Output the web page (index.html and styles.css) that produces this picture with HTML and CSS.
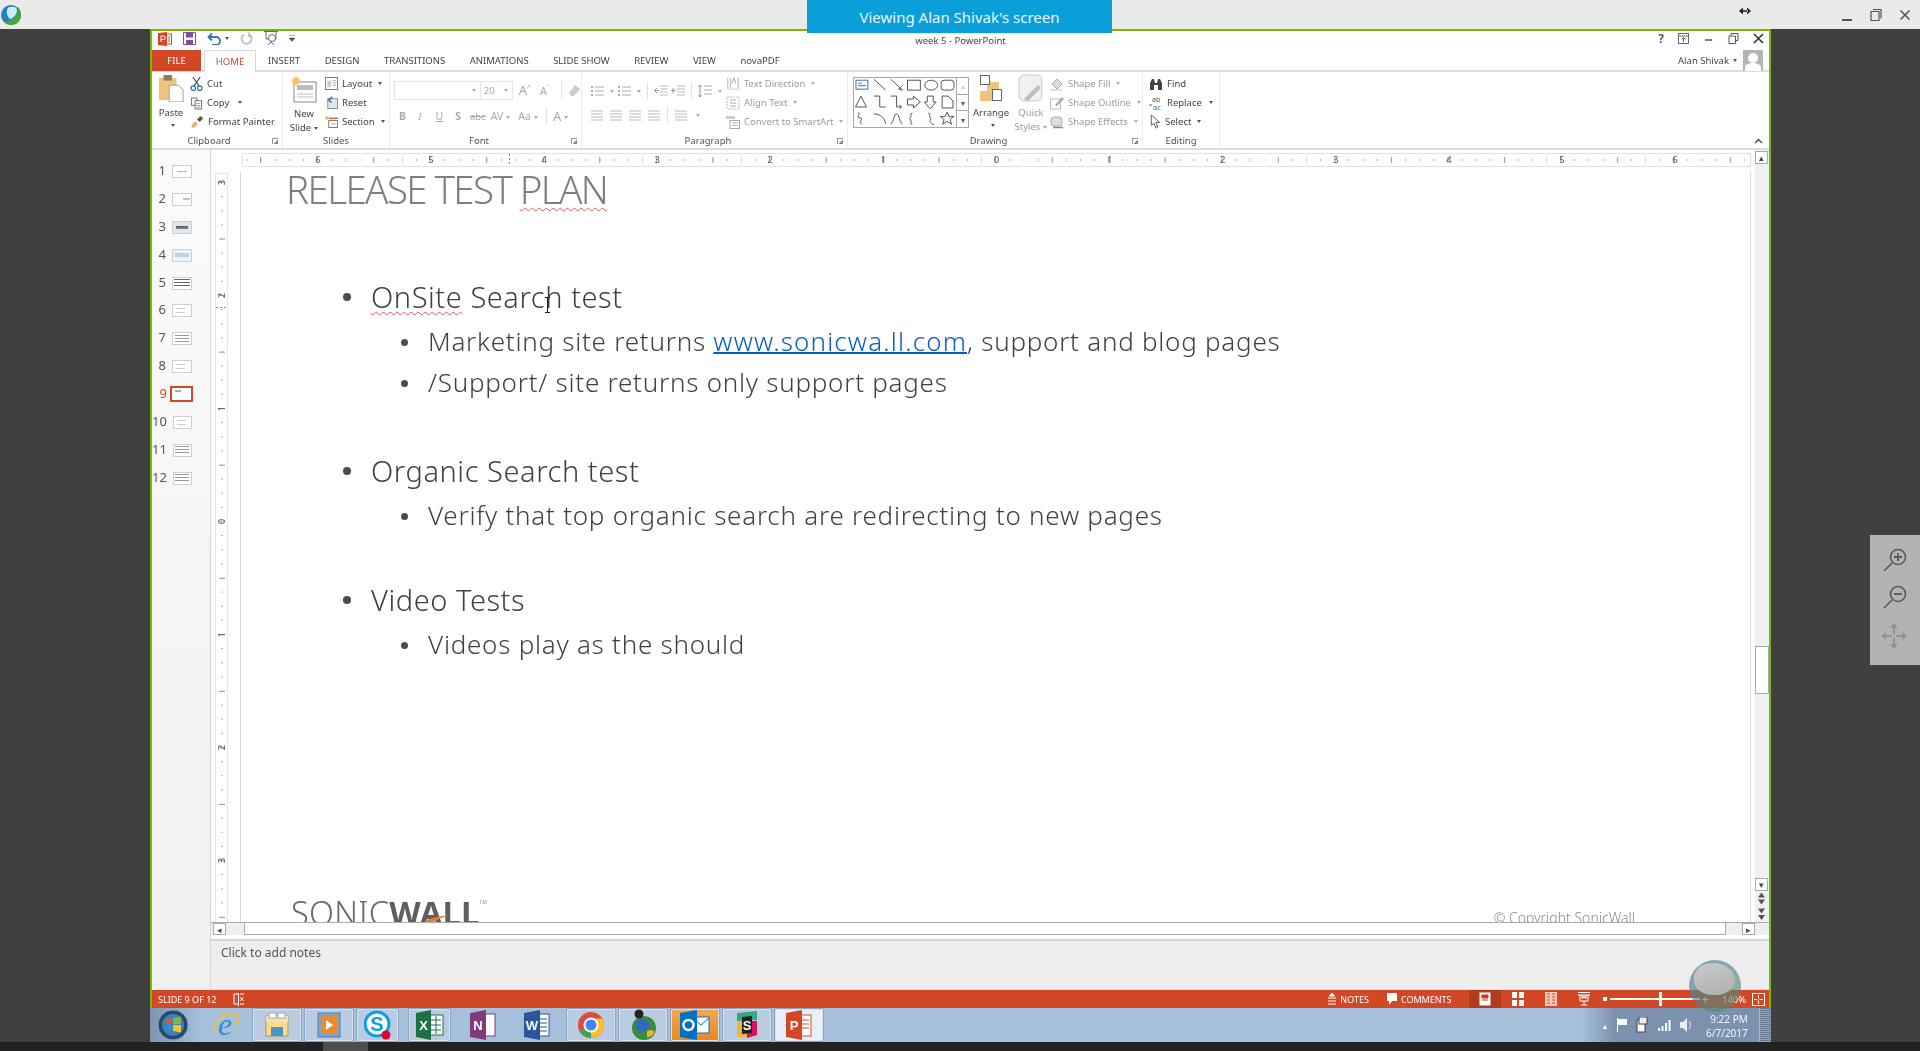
FILE: index.html
```html
<!DOCTYPE html>
<html lang="en">
<head>
  <meta charset="UTF-8">
  <title>Viewing Alan Shivak's screen</title>
  <link rel="stylesheet" href="styles.css">
</head>
<body>

<svg class="sprite" xmlns="http://www.w3.org/2000/svg">
  <symbol id="i-paste" viewBox="0 0 28 30"><rect x="1" y="4" width="19" height="24" fill="#eec47c"/><rect x="6" y="1" width="9" height="6" fill="#8a7a60"/><path d="M12 12h10l5 5v13H12z" fill="#fff" stroke="#999"/></symbol>
  <symbol id="i-cut" viewBox="0 0 14 16"><path d="M3 1l7 10M11 1L4 11" stroke="#555" fill="none" stroke-width="1.4"/><circle cx="3.5" cy="13" r="2.4" fill="none" stroke="#2a6fb5" stroke-width="1.3"/><circle cx="10.5" cy="13" r="2.4" fill="none" stroke="#2a6fb5" stroke-width="1.3"/></symbol>
  <symbol id="i-copy" viewBox="0 0 14 14"><path d="M1.5 1.5h6v8h-6z" fill="#fff" stroke="#666"/><path d="M5.5 4.5h7v9h-7z" fill="#fff" stroke="#666"/><path d="M7 7.5h4M7 9.5h4M7 11.5h4" stroke="#7a9cc0"/></symbol>
  <symbol id="i-painter" viewBox="0 0 16 16"><path d="M2 15c-1-3 1-6 4-8l3 3c-2 3-4 5-7 5z" fill="#e3b670"/><path d="M8 5l4-4 3 3-4 4z" fill="#555"/></symbol>
  <symbol id="i-newslide" viewBox="0 0 26 28"><rect x="3" y="6" width="22" height="20" fill="#fff" stroke="#888"/><rect x="6" y="9" width="16" height="5" fill="#bbb"/><path d="M6 18h16M6 21h16" stroke="#bbb"/><circle cx="5" cy="5" r="3.4" fill="#f2c265"/><path d="M5 0v10M0 5h10M1.5 1.5l7 7M8.5 1.5l-7 7" stroke="#f2c265"/></symbol>
  <symbol id="i-layout" viewBox="0 0 14 14"><rect x=".5" y=".5" width="13" height="13" fill="#fff" stroke="#777"/><rect x="2.5" y="4" width="4" height="7" fill="#ccc"/><path d="M8 4h4M8 6.500h4M8 9h4" stroke="#aaa"/></symbol>
  <symbol id="i-reset" viewBox="0 0 14 14"><rect x="3" y="3" width="10.500" height="10.500" fill="#dfe8f2" stroke="#888"/><path d="M8 1L4 4l3 3" fill="none" stroke="#2a6fb5" stroke-width="1.500"/></symbol>
  <symbol id="i-section" viewBox="0 0 14 14"><rect x="4" y="6" width="9.500" height="7.500" fill="#fff" stroke="#777"/><path d="M4 3.500h10" stroke="#d9662e" stroke-width="1.500"/><circle cx="2" cy="3" r="2" fill="#f0bd60"/><path d="M6 9.500h6" stroke="#aaa"/></symbol>
  <symbol id="i-lines" viewBox="0 0 12 12"><path d="M0 2h12M0 5h12M0 8h12M0 11h12" stroke="currentColor"/></symbol>
  <symbol id="i-bullets" viewBox="0 0 14 12"><path d="M5 2h9M5 6h9M5 10h9" stroke="#aaa"/><path d="M1 1h2v2H1zM1 5h2v2H1zM1 9h2v2H1z" fill="#aaa"/></symbol>
  <symbol id="i-indent" viewBox="0 0 14 12"><path d="M6 1h8M6 4h8M6 7h8M6 10h8" stroke="#bbb"/><path d="M0 5.500h5M3 3L.5 5.500 3 8" stroke="#999" fill="none"/></symbol>
  <symbol id="i-spacing" viewBox="0 0 14 14"><path d="M6 2h8M6 6h8M6 10h8" stroke="#aaa"/><path d="M2 1v12M.5 3L2 1l1.500 2M.5 11L2 13l1.500-2" stroke="#999" fill="none"/></symbol>
  <symbol id="i-textdir" viewBox="0 0 14 16"><path d="M1.500 2v11M4.500 2v11M12.500 2v11" stroke="#aaa"/><path d="M6 8l2-6 2 6" stroke="#aaa" fill="none"/><path d="M0 14h14" stroke="#ccc"/></symbol>
  <symbol id="i-align" viewBox="0 0 14 14"><rect x="1" y="1" width="12" height="12" fill="none" stroke="#bbb" stroke-dasharray="2 1"/><path d="M4 4h6M4 7h6M4 10h6" stroke="#aaa"/></symbol>
  <symbol id="i-smartart" viewBox="0 0 14 14"><path d="M0 1h9v3H0z" fill="#ccc"/><rect x="4" y="5.500" width="9.500" height="8" fill="#fff" stroke="#aaa"/><path d="M6 8h6M6 10.500h6" stroke="#bbb"/></symbol>
  <symbol id="i-arrange" viewBox="0 0 24 28"><rect x="8" y="8" width="12" height="13" fill="#eec47c"/><rect x="1" y="17" width="12" height="10" fill="#eec47c"/><rect x="1.500" y="1.500" width="9" height="9" fill="#fff" stroke="#666"/><rect x="13.500" y="15.500" width="9" height="11" fill="#fff" stroke="#666"/></symbol>
  <symbol id="i-quick" viewBox="0 0 26 28"><rect x="1" y="1" width="23" height="26" rx="5" fill="#f2eff1" stroke="#c9c9c9"/><path d="M6 25l14-14 3 3-13 13z" fill="#bdbdbd"/></symbol>
  <symbol id="i-fill" viewBox="0 0 14 14"><path d="M2 7l5-5 5 5-5 5z" fill="#ddd" stroke="#aaa"/><path d="M0 12h12v2H0z" fill="#e3e3e3"/></symbol>
  <symbol id="i-outline" viewBox="0 0 14 14"><rect x=".5" y="3" width="10" height="10" fill="#fff" stroke="#bbb"/><path d="M5 9l7-8 2 2-7 7z" fill="#aaa"/></symbol>
  <symbol id="i-effects" viewBox="0 0 14 14"><rect x="1" y="2" width="11" height="9" rx="3" fill="#ddd" stroke="#aaa"/><path d="M3 12.500h10" stroke="#888" stroke-width="1.500"/></symbol>
  <symbol id="i-find" viewBox="0 0 14 14"><path d="M1 13V6l2-4h2l1 4h2l1-4h2l2 4v7H9V8H5v5z" fill="#444"/></symbol>
  <symbol id="i-replace" viewBox="0 0 14 14"><text x="3" y="6" font-size="7" fill="#555" font-family="Noto Sans">ab</text><text x="4" y="13.500" font-size="7.500" fill="#2a6fb5" font-family="Noto Sans">ac</text><path d="M0 9h3" stroke="#2a6fb5"/></symbol>
  <symbol id="i-select" viewBox="0 0 12 16"><path d="M2 1v11l3-2 2 5 2-1-2-5h4z" fill="#fff" stroke="#555"/></symbol>
</svg>

<div class="viewing-tab">Viewing Alan Shivak's screen</div>

<header class="topbar">
  <svg class="app-logo" width="22" height="22" viewBox="0 0 22 22"><circle cx="11" cy="11" r="10" fill="#1d83c5"/><path d="M11 21c6 0 10-4 10-10 0-4-2-7-3-8 0 8-4 14-14 15 2 2 4 3 7 3z" fill="#4aa53e"/><path d="M9 3c5-1 8 0 8 3 0 4-3 8-7 9-3-2-5-9-1-12z" fill="#cfe9f5"/></svg>
  <div class="topbar-right">
    <svg class="resize-arrow" width="12" height="8" viewBox="0 0 12 8"><path d="M0 4l4-3.500v7zM12 4L8 .5v7zM3 3.200h6v1.600H3z" fill="#222"/></svg>
    <svg class="host-ctl" width="12" height="14" viewBox="0 0 12 14"><path d="M1 12h10" stroke="#555" stroke-width="2"/></svg>
    <svg class="host-ctl" width="12" height="14" viewBox="0 0 12 14"><path d="M3 1.500h8v9M1 3.500h8v9H1z" stroke="#555" fill="none" stroke-width="1.200"/></svg>
    <svg class="host-ctl" width="12" height="14" viewBox="0 0 12 14"><path d="M1.500 2.500l9 9M10.500 2.500l-9 9" stroke="#555" stroke-width="1.600"/></svg>
  </div>
</header>

<main class="stage">
  <div class="desktop">
    <div class="window">

      <div class="titlebar">
        <div class="qat">
          <svg width="14" height="14" viewBox="0 0 14 14"><rect x="5" y="2" width="8.500" height="10" fill="#fff" stroke="#d24726"/><path d="M0 1l9-1v14l-9-1z" fill="#d24726"/><path d="M3 10V4h2.500a1.500 1.500 0 0 1 0 3.500H3" fill="none" stroke="#fff"/><path d="M10 5h2M10 7h2M10 9h2" stroke="#d24726"/></svg>
          <svg width="13" height="13" viewBox="0 0 13 13"><path d="M.5.500h12v12H.5z" fill="#fff" stroke="#7d4ea5"/><path d="M3 .5h7v5H3zM3 8h7v4.500H3z" fill="#7d4ea5"/></svg>
          <svg width="14" height="13" viewBox="0 0 14 13"><path d="M2 5h7a4 4 0 0 1 0 8H5M5 1.500L1.500 5 5 8.500" stroke="#3474b5" fill="none" stroke-width="1.800"/></svg>
          <i class="caret caret-dark"></i>
          <svg width="13" height="13" viewBox="0 0 13 13"><path d="M9 2.500a5 5 0 1 1-5 0M9 .5v3.500h3" stroke="#bbb" fill="none" stroke-width="1.800"/></svg>
          <svg width="14" height="15" viewBox="0 0 14 15"><path d="M0 .5h14M2 1v7h10V1M7 8v3M4 14l3-3 3 3" stroke="#666" fill="none"/><circle cx="8" cy="7" r="3.500" fill="#fff" stroke="#666"/></svg>
          <svg width="6" height="7" viewBox="0 0 6 7"><path d="M0 .5h6M0 3h6L3 6.500z" fill="#555" stroke="#555" stroke-width=".5"/></svg>
        </div>
        <div class="doc-title">week 5 - PowerPoint</div>
        <div class="win-ctls">
          <span class="help">?</span>
          <svg width="11" height="11" viewBox="0 0 11 11"><rect x=".5" y=".5" width="10" height="10" fill="none" stroke="#666"/><path d="M.5 3h10M5.500 9V4.500M3.500 6.500l2-2 2 2" stroke="#666" fill="none"/></svg>
          <svg width="11" height="11" viewBox="0 0 11 11"><path d="M2 7h7" stroke="#555" stroke-width="1.500"/></svg>
          <svg width="11" height="11" viewBox="0 0 11 11"><path d="M3 2.500V.5h7v7H8M1 3h6.500v7.500H1z" fill="none" stroke="#555"/></svg>
          <svg width="11" height="11" viewBox="0 0 11 11"><path d="M1 1l9 9M10 1l-9 9" stroke="#333" stroke-width="1.600"/></svg>
        </div>
      </div>

      <nav class="tabs">
        <div class="tab-file">FILE</div>
        <div class="tab tab-active">HOME</div>
        <div class="tab">INSERT</div>
        <div class="tab">DESIGN</div>
        <div class="tab">TRANSITIONS</div>
        <div class="tab">ANIMATIONS</div>
        <div class="tab">SLIDE SHOW</div>
        <div class="tab">REVIEW</div>
        <div class="tab">VIEW</div>
        <div class="tab tab-nova">novaPDF</div>
        <div class="user">
          <span>Alan Shivak</span><i class="caret caret-dark"></i>
          <svg class="avatar" width="20" height="21" viewBox="0 0 20 21"><rect width="20" height="21" fill="#b5b5b5"/><circle cx="10" cy="8" r="5" fill="#fff"/><path d="M2 21v-4c1-3 5-4 8-4s7 1 8 4v4z" fill="#fff"/></svg>
        </div>
      </nav>

      <section class="ribbon">
        <div class="group group-clipboard">
          <div class="group-body">
            <div class="big-btn big-paste">
              <svg width="26" height="28"><use href="#i-paste"/></svg>
              <span>Paste</span>
              <i class="caret caret-dark"></i>
            </div>
            <div class="stack">
              <div class="small-btn"><svg width="13" height="15"><use href="#i-cut"/></svg>Cut</div>
              <div class="small-btn"><svg width="13" height="14"><use href="#i-copy"/></svg>Copy<i class="caret caret-dark caret-far"></i></div>
              <div class="small-btn"><svg width="14" height="14"><use href="#i-painter"/></svg>Format Painter</div>
            </div>
          </div>
          <div class="group-label">Clipboard<i class="launcher"></i></div>
        </div>

        <div class="group group-slides">
          <div class="group-body">
            <div class="big-btn big-new">
              <svg width="26" height="28"><use href="#i-newslide"/></svg>
              <span>New</span>
              <span>Slide<i class="caret caret-dark"></i></span>
            </div>
            <div class="stack">
              <div class="small-btn"><svg width="13" height="13"><use href="#i-layout"/></svg>Layout<i class="caret caret-dark"></i></div>
              <div class="small-btn"><svg width="13" height="13"><use href="#i-reset"/></svg>Reset</div>
              <div class="small-btn"><svg width="13" height="13"><use href="#i-section"/></svg>Section<i class="caret caret-dark"></i></div>
            </div>
          </div>
          <div class="group-label">Slides</div>
        </div>

        <div class="group group-font">
          <div class="font-rows">
            <div class="font-row">
              <div class="combo combo-font"><i class="caret"></i></div>
              <div class="combo combo-size">20<i class="caret"></i></div>
              <span class="glyph glyph-grow">A<sup>^</sup></span>
              <span class="glyph glyph-shrink">A<sup>ˇ</sup></span>
              <i class="vsep"></i>
              <svg width="13" height="13" viewBox="0 0 13 13"><path d="M1 9l6-8 5 4-6 7H3z" fill="#ccc"/><path d="M6 6l3 3" stroke="#f2c2b5"/></svg>
            </div>
            <div class="font-row font-row-b">
              <b class="glyph">B</b><em class="glyph glyph-i">I</em><u class="glyph">U</u><b class="glyph glyph-s">S</b><span class="glyph glyph-abc"><s>abc</s></span><span class="glyph glyph-av">AV<i class="caret"></i></span><span class="glyph glyph-aa">Aa<i class="caret"></i></span><i class="vsep"></i><span class="glyph glyph-a">A<i class="caret"></i></span>
            </div>
          </div>
          <div class="group-label">Font<i class="launcher"></i></div>
        </div>

        <div class="group group-para">
          <div class="group-body">
            <div class="para-rows">
              <div class="para-row">
                <svg width="14" height="12"><use href="#i-bullets"/></svg><i class="caret"></i>
                <svg width="14" height="12"><use href="#i-bullets"/></svg><i class="caret"></i>
                <i class="vsep"></i>
                <svg width="14" height="12"><use href="#i-indent"/></svg>
                <svg width="14" height="12"><use href="#i-indent"/></svg>
                <i class="vsep"></i>
                <svg width="14" height="14"><use href="#i-spacing"/></svg><i class="caret"></i>
              </div>
              <div class="para-row para-row-b">
                <svg class="align-icon" width="14" height="12"><use href="#i-lines"/></svg>
                <svg class="align-icon" width="14" height="12"><use href="#i-lines"/></svg>
                <svg class="align-icon" width="14" height="12"><use href="#i-lines"/></svg>
                <svg class="align-icon" width="14" height="12"><use href="#i-lines"/></svg>
                <i class="vsep"></i>
                <svg class="align-icon" width="14" height="12"><use href="#i-lines"/></svg><i class="caret"></i>
              </div>
            </div>
            <div class="stack stack-off">
              <div class="small-btn"><svg width="14" height="15"><use href="#i-textdir"/></svg>Text Direction<i class="caret"></i></div>
              <div class="small-btn"><svg width="14" height="14"><use href="#i-align"/></svg>Align Text<i class="caret"></i></div>
              <div class="small-btn"><svg width="14" height="14"><use href="#i-smartart"/></svg>Convert to SmartArt<i class="caret"></i></div>
            </div>
          </div>
          <div class="group-label">Paragraph<i class="launcher"></i></div>
        </div>

        <div class="group group-draw">
          <div class="group-body">
            <div class="gallery">
              <svg width="103" height="49" viewBox="0 0 103 49" fill="none" stroke="#555">
                <rect x="2" y="2" width="12" height="9" stroke="#3e6ea8"/><path d="M4 5h4M4 7.500h8" stroke="#3e6ea8"/>
                <path d="M20 1l12 11M37 1l12 11M49 12l-4-1 3-3"/>
                <rect x="54" y="2" width="13" height="10"/><ellipse cx="78" cy="7" rx="6.500" ry="5"/><rect x="88" y="2" width="13" height="10" rx="3"/>
                <path d="M7 18l5.500 11H1.500zM20 18h6v11h6M37 18h6v11h5M46 27l2 2-2 2M54 21h6v-3l7 6-7 6v-3h-6zM74 18h6v6h3l-6 7-6-7h3zM89 18h6l5 5v7H89z"/>
                <path d="M4 35c4 0-3 5 2 5s-3 5 2 6M20 36c6 0 11 4 12 10M37 46c3 0 3-10 6-10s3 10 6 10M59 35c-3 0 0 5-3 6 3 1 0 6 3 6M75 35c3 0 0 5 3 6-3 1 0 6 3 6"/>
                <path d="M94 34l2 4.500h5l-4 3 1.500 5L94 43.500 89.500 46.500l1.500-5-4-3h5z"/>
              </svg>
              <div class="gallery-scroll">
                <span class="off">&#9652;</span><span>&#9662;</span><span>&#9662;</span>
              </div>
            </div>
            <div class="big-btn big-arrange">
              <svg width="24" height="28"><use href="#i-arrange"/></svg>
              <span>Arrange</span>
              <i class="caret caret-dark"></i>
            </div>
            <div class="big-btn big-quick">
              <svg width="26" height="28"><use href="#i-quick"/></svg>
              <span>Quick</span>
              <span>Styles<i class="caret"></i></span>
            </div>
            <div class="stack stack-off">
              <div class="small-btn"><svg width="14" height="14"><use href="#i-fill"/></svg>Shape Fill<i class="caret"></i></div>
              <div class="small-btn"><svg width="14" height="14"><use href="#i-outline"/></svg>Shape Outline<i class="caret"></i></div>
              <div class="small-btn"><svg width="14" height="14"><use href="#i-effects"/></svg>Shape Effects<i class="caret"></i></div>
            </div>
          </div>
          <div class="group-label">Drawing<i class="launcher"></i></div>
        </div>

        <div class="group group-edit">
          <div class="group-body">
            <div class="stack">
              <div class="small-btn"><svg width="14" height="14"><use href="#i-find"/></svg>Find</div>
              <div class="small-btn"><svg width="14" height="14"><use href="#i-replace"/></svg>Replace<i class="caret caret-dark caret-far"></i></div>
              <div class="small-btn"><svg width="12" height="15"><use href="#i-select"/></svg>Select<i class="caret caret-dark"></i></div>
            </div>
          </div>
          <div class="group-label">Editing</div>
        </div>

        <svg class="collapse" width="9" height="6" viewBox="0 0 9 6"><path d="M1 5l3.500-3.500L8 5" stroke="#444" fill="none" stroke-width="1.300"/></svg>
      </section>

      <div class="workspace">
        <aside class="thumbs">
          <div class="thumb-row"><span>1</span><i class="thumb thumb-orange"></i></div>
          <div class="thumb-row"><span>2</span><i class="thumb thumb-orange2"></i></div>
          <div class="thumb-row"><span>3</span><i class="thumb thumb-dark"></i></div>
          <div class="thumb-row"><span>4</span><i class="thumb thumb-blue"></i></div>
          <div class="thumb-row"><span>5</span><i class="thumb thumb-dark2"></i></div>
          <div class="thumb-row"><span>6</span><i class="thumb thumb-light"></i></div>
          <div class="thumb-row"><span>7</span><i class="thumb thumb-text"></i></div>
          <div class="thumb-row"><span>8</span><i class="thumb thumb-light"></i></div>
          <div class="thumb-row thumb-current"><span>9</span><i class="thumb"></i></div>
          <div class="thumb-row"><span>10</span><i class="thumb thumb-light"></i></div>
          <div class="thumb-row"><span>11</span><i class="thumb thumb-text"></i></div>
          <div class="thumb-row"><span>12</span><i class="thumb thumb-text"></i></div>
        </aside>

        <div class="editor">
          <div class="editor-top">
            <div class="editor-left">
              <div class="ruler-h">
                <i class="ruler-mark"></i>
                <span>6</span><span>5</span><span>4</span><span>3</span><span>2</span><span>1</span><span>0</span><span>1</span><span>2</span><span>3</span><span>4</span><span>5</span><span>6</span>
              </div>
              <div class="canvas">
                <div class="ruler-v">
                  <i class="ruler-mark-v"></i>
                  <div class="ruler-v-nums">
                    <span><b>3</b></span><span><b>2</b></span><span><b>1</b></span><span><b>0</b></span><span><b>1</b></span><span><b>2</b></span><span><b>3</b></span>
                  </div>
                </div>
                <article class="slide">
                  <h1 class="slide-title">RELEASE TEST <span class="spell">PLAN</span></h1>
                  <div class="slide-body">
                    <section class="topic topic-first">
                      <p class="lvl1"><span class="spell">OnSite</span> Search test</p>
                      <p class="lvl2">Marketing site returns <a class="slide-link">www.sonicwa.ll.com</a>, support and blog pages</p>
                      <p class="lvl2">/Support/ site returns only support pages</p>
                    </section>
                    <section class="topic topic-second">
                      <p class="lvl1">Organic Search test</p>
                      <p class="lvl2">Verify that top organic search are redirecting to new pages</p>
                    </section>
                    <section class="topic topic-third">
                      <p class="lvl1">Video Tests</p>
                      <p class="lvl2">Videos play as the should</p>
                    </section>
                  </div>
                  <svg class="ibeam" width="7" height="16" viewBox="0 0 7 16"><path d="M1 .5h5M3.500.5v15M1 15.500h5" stroke="#222" fill="none"/></svg>
                  <footer class="slide-foot">
                    <div class="sw-logo">SONIC<b>WALL</b><sup>TM</sup>
                      <svg class="sw-swoosh" width="28" height="8" viewBox="0 0 28 8"><path d="M0 8C6 4 16 1 28 0 20 2 14 5 11 8z" fill="#f47a20"/></svg>
                    </div>
                    <div class="sw-copy">&copy; Copyright SonicWall</div>
                  </footer>
                </article>
              </div>
            </div>
            <div class="vscroll">
              <div class="sb-btn sb-up">&#9652;</div>
              <div class="sb-track"><div class="sb-thumb"></div></div>
              <div class="sb-btn sb-down">&#9662;</div>
              <svg class="sb-double" width="13" height="15" viewBox="0 0 13 15"><path d="M6.500 1.500L10 6.500H3zM3 8.500h7L6.500 13.500z" fill="#555"/></svg>
              <svg class="sb-double sb-last" width="13" height="16" viewBox="0 0 13 16"><path d="M3 2.500h7L6.500 7.500zM3 9h7l-3.500 5z" fill="#555"/></svg>
            </div>
          </div>
          <div class="hscroll">
            <div class="sb-btn">&#9666;</div>
            <div class="hs-thumb"></div>
            <div class="sb-btn">&#9656;</div>
          </div>
          <div class="notes">Click to add notes</div>
        </div>
      </div>

      <footer class="statusbar">
        <span>SLIDE 9 OF 12</span>
        <svg class="st-proof" width="12" height="13" viewBox="0 0 12 13"><path d="M5.500 1H1v10h4.500M5.500 0v13M7 1h4M7 11h4" stroke="#fff" fill="none"/><path d="M7 4l3.500 4M10.500 4L7 8" stroke="#fff"/></svg>
        <div class="st-right">
          <div class="st-item"><svg width="8" height="13" viewBox="0 0 8 13"><path d="M4 0l2.500 3h-5zM0 5h8M0 8h8M0 11h8" fill="#fff" stroke="#fff"/></svg>NOTES</div>
          <div class="st-item st-comments"><svg width="10" height="12" viewBox="0 0 10 12"><path d="M0 0h10v8H5L2 12V8H0z" fill="#fff"/></svg>COMMENTS</div>
          <div class="st-views">
            <div class="st-view st-view-on"><svg width="12" height="14" viewBox="0 0 12 14"><rect x=".5" y=".5" width="11" height="13" fill="#fff"/><path d="M3 3h6v3H3zM3 8h6" fill="#c43e1f" stroke="#c43e1f"/></svg></div>
            <div class="st-view"><svg width="12" height="14" viewBox="0 0 12 14"><path d="M0 0h5v6H0zM7 0h5v6H7zM0 8h5v6H0zM7 8h5v6H7z" fill="#fff"/></svg></div>
            <div class="st-view"><svg width="12" height="14" viewBox="0 0 12 14"><rect width="12" height="14" fill="#f4c9bc"/><path d="M2 2h3M7 2h3M2 5h3M7 5h3M2 8h3M7 8h3M2 11h3M7 11h3" stroke="#d24726"/></svg></div>
            <div class="st-view"><svg width="12" height="14" viewBox="0 0 12 14"><path d="M0 .5h12M0 3h12M2 3v6h8V3M6 9v4M3 13h6" stroke="#fff" fill="none"/><rect x="3" y="3.500" width="6" height="3" fill="#f4c9bc"/></svg></div>
          </div>
          <div class="st-zoom">
            <i class="st-minus"></i>
            <div class="st-track"><i class="st-knob"></i></div>
            <span class="st-plus">+</span>
          </div>
          <span class="st-pct">140%</span>
          <svg class="st-fit" width="13" height="13" viewBox="0 0 13 13"><rect x=".5" y=".5" width="12" height="12" fill="none" stroke="#fff"/><path d="M6.500 2v3.500M6.500 11V7.500M2 6.500h3.500M11 6.500H7.500" stroke="#fff"/></svg>
        </div>
      </footer>
    </div>

    <div class="taskbar">
      <div class="task task-start">
        <svg width="32" height="32" viewBox="0 0 32 32"><circle cx="16" cy="16" r="15" fill="#27486e" stroke="#7e9cbc"/><circle cx="16" cy="16" r="11" fill="#3f7fb8"/><path d="M8 11l7-2v6H8z" fill="#e0552b"/><path d="M16 9l8-1.500V15h-8z" fill="#7db941"/><path d="M8 16h7v6l-7-1.500z" fill="#2d8fd5"/><path d="M16 16h8v7.500L16 22z" fill="#f3c22c"/></svg>
      </div>
      <div class="task task-ie">
        <svg width="30" height="30" viewBox="0 0 30 30"><text x="15" y="25" text-anchor="middle" font-family="Liberation Serif" font-size="32" fill="#2a8fd6" font-style="italic">e</text><path d="M4 22C2 10 20 0 27 5c3 3-1 8-4 11" fill="none" stroke="#f1c232" stroke-width="2"/></svg>
      </div>
      <div class="task task-open">
        <svg width="30" height="30" viewBox="0 0 30 30"><path d="M4 6h22v20H4z" fill="#f6dc8b" stroke="#b89b4a"/><path d="M4 6h22v6H4z" fill="#f0e2b4"/><rect x="7" y="3" width="7" height="5" fill="#fff" stroke="#aaa"/><rect x="16" y="3" width="7" height="5" fill="#fff" stroke="#aaa"/><rect x="9" y="17" width="12" height="9" fill="#4c93c9"/></svg>
      </div>
      <div class="task task-open">
        <svg width="24" height="26" viewBox="0 0 24 26"><rect x="1" y="1" width="22" height="24" fill="#7ba7cf" stroke="#537da6"/><rect x="4" y="4" width="16" height="18" fill="#eb8b2d"/><path d="M9 8l7 5-7 5z" fill="#fff"/></svg>
      </div>
      <div class="task task-open task-skype">
        <svg width="28" height="30" viewBox="0 0 28 30"><circle cx="13" cy="14" r="12" fill="#fff" stroke="#0b9ee0" stroke-width="3"/><text x="13" y="21" text-anchor="middle" font-family="Liberation Sans" font-weight="700" font-size="20" fill="#0b9ee0">S</text><circle cx="22" cy="25" r="4.500" fill="#e00034"/></svg>
      </div>
      <div class="task task-open task-excel">
        <svg width="28" height="30" viewBox="0 0 28 30"><rect x="12" y="5" width="15" height="20" fill="#fff" stroke="#1e7145"/><path d="M14 10h11M14 15h11M14 20h11M20 6v18" stroke="#1e7145"/><path d="M0 3l15-3v30L0 27z" fill="#1e7145"/><text x="7.500" y="20" text-anchor="middle" font-family="Liberation Sans" font-weight="700" font-size="13" fill="#fff">X</text></svg>
      </div>
      <div class="task task-office task-onenote">
        <svg width="26" height="30" viewBox="0 0 26 30"><rect x="10" y="4" width="15" height="22" fill="#fff" stroke="#80397b"/><path d="M0 3l16-3v30L0 27z" fill="#80397b"/><text x="8" y="20" text-anchor="middle" font-family="Liberation Sans" font-weight="700" font-size="13" fill="#fff">N</text></svg>
      </div>
      <div class="task task-office task-word">
        <svg width="26" height="30" viewBox="0 0 26 30"><rect x="10" y="4" width="15" height="22" fill="#fff" stroke="#2b579a"/><path d="M16 9h7M16 13h7M16 17h7M16 21h7" stroke="#2b579a"/><path d="M0 3l16-3v30L0 27z" fill="#2b579a"/><text x="8" y="20" text-anchor="middle" font-family="Liberation Sans" font-weight="700" font-size="13" fill="#fff">W</text></svg>
      </div>
      <div class="task task-open">
        <svg width="28" height="28" viewBox="0 0 28 28"><circle cx="14" cy="14" r="13" fill="#dd4b39"/><path d="M14 14L2.700 20.500A13 13 0 0 0 14 27z" fill="#3aa757"/><path d="M14 27A13 13 0 0 0 25.300 7.500H14z" fill="#fbc02d"/><circle cx="14" cy="14" r="6.500" fill="#4285f4" stroke="#fff" stroke-width="2"/></svg>
      </div>
      <div class="task task-open">
        <svg width="28" height="32" viewBox="0 0 28 32"><circle cx="15" cy="19" r="12" fill="#3b8c3d"/><path d="M8 12c4-3 10-2 12 2s-3 10-9 8-6-7-3-10z" fill="#2f6ac0"/><path d="M18 22c3-2 7-1 7 1s-4 6-7 5z" fill="#e5b62a"/><circle cx="10" cy="5" r="4.500" fill="#222"/></svg>
      </div>
      <div class="task task-open task-outlook">
        <svg width="30" height="30" viewBox="0 0 30 30"><rect x="13" y="7" width="16" height="16" fill="#fff" stroke="#0072c6"/><path d="M13 8l8 7 8-7" fill="none" stroke="#0072c6"/><path d="M0 3l17-3v30L0 27z" fill="#0072c6"/><circle cx="8.500" cy="15" r="5" fill="none" stroke="#fff" stroke-width="2.500"/></svg>
      </div>
      <div class="task task-open task-slack">
        <svg width="26" height="30" viewBox="0 0 26 30"><path d="M3 3l20-2v9L3 11z" fill="#35a77d"/><path d="M3 11l10 0v16H3z" fill="#e8b63e"/><path d="M13 11l10 0v14l-10 3z" fill="#d8125b"/><path d="M8 7l10-1v17l-10 1z" fill="#222"/><text x="13" y="20" text-anchor="middle" font-family="Liberation Sans" font-weight="700" font-size="13" fill="#fff">S</text></svg>
      </div>
      <div class="task task-open task-ppt">
        <svg width="26" height="30" viewBox="0 0 26 30"><rect x="10" y="5" width="15" height="21" fill="#fff" stroke="#d24726"/><path d="M16 10h7M16 14h7M16 18h7" stroke="#d24726"/><path d="M0 3l16-3v30L0 27z" fill="#d24726"/><text x="8" y="20" text-anchor="middle" font-family="Liberation Sans" font-weight="700" font-size="13" fill="#fff">P</text></svg>
      </div>

      <div class="tray">
        <span class="tray-up">&#9652;</span>
        <svg width="11" height="14" viewBox="0 0 11 14"><path d="M1.500 0v14" stroke="#fff"/><path d="M2 1h9v6H2z" fill="#fff"/></svg>
        <svg width="12" height="16" viewBox="0 0 12 16"><rect x="1" y="3" width="8" height="12" fill="#fff" stroke="#444"/><rect x="3" y="0" width="8" height="7" fill="#eee" stroke="#444"/></svg>
        <svg width="14" height="11" viewBox="0 0 14 11"><path d="M1 8h2v3H1zM4.500 6h2v5h-2zM8 3h2v8H8zM11.500 0h2v11h-2z" fill="#fff"/></svg>
        <svg width="11" height="14" viewBox="0 0 11 14"><path d="M0 4h3l4-4v14l-4-4H0z" fill="#eee"/><path d="M9 3c2 3 2 5 0 8" stroke="#eee" fill="none"/></svg>
        <div class="clock"><span>9:22 PM</span><span>6/7/2017</span></div>
        <div class="show-desktop"></div>
      </div>
    </div>
  </div>

  <div class="touch-circle"><i></i></div>

  <div class="zoom-panel">
    <svg width="24" height="24" viewBox="0 0 24 24"><circle cx="15" cy="9" r="7.500" fill="none" stroke="#595959" stroke-width="1.600"/><path d="M9 15l-8 8" stroke="#595959" stroke-width="1.600"/><path d="M11 9h8M15 5v8" stroke="#595959" stroke-width="1.800"/></svg>
    <svg width="24" height="24" viewBox="0 0 24 24"><circle cx="15" cy="9" r="7.500" fill="none" stroke="#595959" stroke-width="1.600"/><path d="M9 15l-8 8" stroke="#595959" stroke-width="1.600"/><path d="M11 9h8" stroke="#595959" stroke-width="1.800"/></svg>
    <svg class="pan" width="26" height="26" viewBox="0 0 26 26"><path d="M13 0l4 5h-3v6.500H12V5H9zM13 26l-4-5h3v-6.500h2V21h3zM0 13l5-4v3h6v2H5v3zM26 13l-5 4v-3h-6v-2h6V9z" fill="#929292"/></svg>
  </div>
</main>

<div class="bottombar"><div class="bottom-seg"></div></div>

</body>
</html>
```

FILE: styles.css
```css
* {
  box-sizing: border-box;
}
html, body {
  height: 100%;
}
body {
  margin: 0;
  display: flex;
  flex-direction: column;
  position: relative;
  overflow: hidden;
  font-family: "Noto Sans", "Open Sans", sans-serif;
  background-color: #3f3f3f;
  color: #444;
}
svg {
  display: block;
  flex: none;
}
.sprite {
  display: none;
}

/* host app chrome */
.topbar {
  height: 29px;
  flex: none;
  display: flex;
  align-items: center;
  justify-content: space-between;
  background-color: #eaeaea;
}
.topbar-right {
  display: flex;
  align-items: center;
  padding-right: 9px;
}
.resize-arrow {
  margin: -8px 73px 0 0;
}
.host-ctl {
  margin-left: 17px;
}
.viewing-tab {
  position: absolute;
  top: 0;
  left: 807px;
  width: 305px;
  height: 33px;
  z-index: 5;
  display: flex;
  align-items: center;
  justify-content: center;
  background-color: #0a9fd8;
  color: #e8f6fc;
  font-size: 15px;
}
.stage {
  flex: 1;
  min-height: 0;
  display: flex;
  padding-left: 150px;
}
.bottombar {
  height: 9px;
  flex: none;
  padding-left: 323px;
  background-color: #222;
}
.bottom-seg {
  width: 45px;
  height: 9px;
  background-color: #4d4d4d;
}
.desktop {
  width: 1621px;
  display: flex;
  flex-direction: column;
  filter: blur(0.35px);
}
.window {
  flex: 1;
  min-height: 0;
  display: flex;
  flex-direction: column;
  background-color: #fff;
  border: 2px solid #7ab800;
  border-bottom: 0;
}

/* title + tabs */
.titlebar {
  height: 19px;
  flex: none;
  display: grid;
  grid-template-columns: 1fr auto 1fr;
  align-items: center;
  font-size: 9.5px;
}
.qat {
  display: flex;
  align-items: center;
  gap: 11px;
  padding: 0 0 4px 6px;
}
.qat .caret {
  margin-left: -7px;
}
.doc-title {
  color: #444;
  padding-bottom: 1px;
}
.win-ctls {
  display: flex;
  align-items: center;
  justify-content: flex-end;
  gap: 14px;
  padding: 0 5px 4px 0;
}
.help {
  font-size: 12px;
  font-weight: 700;
  color: #555;
  line-height: 11px;
}
.tabs {
  height: 22px;
  flex: none;
  display: flex;
  align-items: stretch;
  gap: 24.5px;
  border-bottom: 2px solid #dcdcdc;
  font-size: 9.5px;
  color: #444;
}
.tab-file {
  width: 49px;
  margin-right: -21.5px;
  display: flex;
  align-items: center;
  justify-content: center;
  background-color: #d24726;
  color: #fff;
  margin-bottom: -1px;
}
.tab {
  display: flex;
  align-items: center;
}
.tab-active {
  width: 52px;
  justify-content: center;
  color: #d24726;
  background-color: #fff;
  border: 1px solid #d8d8d8;
  border-bottom: 0;
  margin: 0 -12.5px -2px 0;
}
.user {
  margin-left: auto;
  display: flex;
  align-items: center;
  gap: 6px;
  padding-right: 6px;
  margin-bottom: -1px;
}
.user .caret {
  margin-left: -2px;
}
.avatar {
  align-self: flex-end;
}
.caret {
  display: inline-block;
  flex: none;
  width: 0;
  height: 0;
  margin-left: 3px;
  vertical-align: middle;
  border-left: 2.5px solid transparent;
  border-right: 2.5px solid transparent;
  border-top: 3px solid #aaa;
}
.caret-dark {
  border-top-color: #555;
}
.caret-far {
  margin-left: 6px;
}

/* ribbon */
.ribbon {
  height: 78px;
  flex: none;
  display: flex;
  position: relative;
  border-bottom: 2px solid #dcdcdc;
  font-size: 9.5px;
  color: #444;
}
.group {
  flex: none;
  display: flex;
  flex-direction: column;
  padding-top: 2px;
  border-right: 1px solid #ececec;
}
.group-clipboard { width: 131px; }
.group-slides { width: 107px; }
.group-font { width: 192px; }
.group-para { width: 266px; }
.group-draw { width: 295px; }
.group-edit { width: 77px; }
.group-body {
  flex: 1;
  display: flex;
  min-height: 0;
}
.group-label {
  height: 17px;
  flex: none;
  position: relative;
  padding: 3px 13px 0 0;
  text-align: center;
  font-size: 9.5px;
  color: #555;
  line-height: 14px;
}
.group-clipboard .group-label {
  padding-right: 16px;
}
.group-slides .group-label, .group-edit .group-label {
  padding-right: 0;
}
.launcher {
  position: absolute;
  right: 4px;
  top: 7px;
  width: 6px;
  height: 6px;
  border-left: 1px solid #999;
  border-top: 1px solid #999;
  background: linear-gradient(135deg, transparent 55%, #888 55%);
}
.big-btn {
  display: flex;
  flex-direction: column;
  align-items: center;
  line-height: 14px;
}
.big-btn svg {
  margin-bottom: 4px;
}
.big-paste {
  width: 38px;
}
.big-paste span {
  margin-bottom: 4px;
}
.big-new {
  width: 42px;
  padding-top: 2px;
}
.big-new svg {
  margin-bottom: 3px;
}
.big-new span {
  white-space: nowrap;
}
.stack {
  display: flex;
  flex-direction: column;
}
.stack-off {
  color: #9a9a9a;
}
.small-btn {
  height: 19px;
  display: flex;
  align-items: center;
  gap: 3px;
  white-space: nowrap;
}
.small-btn svg {
  margin-right: 1px;
}
.font-rows {
  flex: 1;
  padding: 6px 0 0 4px;
}
.font-row {
  height: 20px;
  display: flex;
  align-items: center;
  color: #aaa;
}
.font-row-b {
  height: 18px;
  margin-top: 7px;
  padding-left: 5px;
  font-size: 10.5px;
}
.combo {
  height: 19px;
  display: flex;
  align-items: center;
  justify-content: flex-end;
  gap: 6px;
  padding-right: 4px;
  border: 1px solid #e4e4e4;
  font-size: 9.5px;
}
.combo-font {
  width: 88px;
}
.combo-size {
  width: 33px;
  margin-left: -1px;
  justify-content: space-between;
  padding-left: 3px;
}
.glyph {
  flex: none;
  color: #aaa;
  font-style: normal;
}
.glyph sup {
  font-size: 7px;
  line-height: 0;
}
.glyph-grow {
  margin-left: 6px;
  font-size: 13px;
}
.glyph-shrink {
  margin-left: 9px;
  font-size: 11px;
  margin-right: 5px;
}
.vsep {
  flex: none;
  width: 1px;
  height: 18px;
  margin: 0 6px;
  background-color: #e2e2e2;
}
.font-row-b .glyph {
  margin-right: 12px;
}
.font-row-b .glyph-i {
  font-style: italic;
  font-family: "Liberation Serif", serif;
  margin-right: 14px;
}
.font-row-b .glyph-s {
  margin-right: 9px;
}
.font-row-b .glyph-abc {
  font-size: 9.5px;
  margin-right: 5px;
}
.font-row-b .glyph-av {
  margin-right: 8px;
}
.font-row-b .glyph-aa {
  margin-right: 2px;
}
.font-row-b .glyph-a {
  margin: 0;
  font-size: 13px;
}
.para-rows {
  width: 144px;
  padding: 7px 0 0 8px;
}
.para-row {
  display: flex;
  align-items: center;
  height: 20px;
  gap: 3px;
}
.para-row .vsep {
  margin: 0 3px;
}
.para-row-b {
  margin-top: 4px;
  gap: 5px;
}
.para-row-b .vsep {
  margin: 0 1px;
}
.align-icon {
  color: #bbb;
}
.gallery {
  width: 116px;
  height: 51px;
  margin: 3px 0 0 5px;
  display: flex;
  border: 1px solid #a8a8a8;
}
.gallery svg {
  flex: 1;
}
.gallery-scroll {
  width: 12px;
  display: flex;
  flex-direction: column;
  font-size: 8px;
  color: #555;
  border-left: 1px solid #a8a8a8;
}
.gallery-scroll span {
  flex: 1;
  display: flex;
  align-items: center;
  justify-content: center;
  border-bottom: 1px solid #a8a8a8;
}
.gallery-scroll span:last-child {
  border-bottom: 0;
}
.gallery-scroll .off {
  color: #ccc;
}
.big-arrange {
  width: 42px;
  margin-left: 1px;
}
.big-arrange i {
  margin-top: 4px;
}
.big-quick {
  width: 38px;
  color: #9a9a9a;
}
.group-edit .stack {
  padding-left: 6px;
}
.group-edit .caret-far {
  margin-left: 4px;
}
.collapse {
  position: absolute;
  right: 6px;
  bottom: 4px;
}

/* thumbnails */
.workspace {
  flex: 1;
  min-height: 0;
  display: flex;
}
.thumbs {
  width: 59px;
  flex: none;
  padding-top: 13px;
  background: linear-gradient(#fbfbfb, #f0f0f0);
  border-right: 1px solid #d6d6d6;
}
.thumb-row {
  height: 27.9px;
  display: flex;
  padding-right: 18px;
  justify-content: flex-end;
  gap: 6px;
  font-size: 13px;
  line-height: 15px;
  color: #555;
}
.thumb {
  display: block;
  width: 20px;
  height: 13px;
  margin-top: 2px;
  background: #fff no-repeat center;
  border: 1px solid #cfcfcf;
}
.thumb-orange { background-image: linear-gradient(#f0a36b, #f0a36b); background-size: 10px 1px; }
.thumb-orange2 { background-image: linear-gradient(#f0b48a, #f0b48a); background-size: 7px 2px; background-position: 10px 4px; }
.thumb-dark { background-color: #dfe8f2; background-image: linear-gradient(#555, #8a8a8a); background-size: 12px 3px; }
.thumb-blue { background-color: #eef3f9; background-image: linear-gradient(#bcd2e8, #bcd2e8); background-size: 14px 4px; }
.thumb-dark2 { background-image: repeating-linear-gradient(#666 0 1px, #fff 1px 3px); background-size: 16px 8px; }
.thumb-light { background-image: repeating-linear-gradient(#ccc 0 1px, #fff 1px 4px); background-size: 9px 7px; background-position: 3px 3px; }
.thumb-text { background-image: repeating-linear-gradient(#999 0 1px, #fff 1px 3px); background-size: 14px 8px; }
.thumb-current {
  color: #d24726;
  padding-right: 17px;
  gap: 3px;
}
.thumb-current .thumb {
  width: 23px;
  height: 16px;
  margin-top: 0;
  border: 2px solid #d24726;
  background-image: linear-gradient(#aaa 2px, transparent 2px);
  background-size: 6px 6px;
  background-position: 3px 2px;
}

/* editor */
.editor {
  flex: 1;
  min-width: 0;
  display: flex;
  flex-direction: column;
}
.editor-top {
  flex: 1;
  min-height: 0;
  display: flex;
}
.editor-left {
  flex: 1;
  min-width: 0;
  display: flex;
  flex-direction: column;
}
.ruler-h {
  height: 14px;
  margin: 3px 4px 5px 31px;
  flex: none;
  position: relative;
  display: flex;
  justify-content: center;
  overflow: hidden;
  border: 1px solid #e2e2e2;
  background-image: linear-gradient(90deg, #b0b0b0 1px, transparent 1px), linear-gradient(90deg, #999 1px, transparent 1px);
  background-size: 14.14px 2px, 56.55px 6px;
  background-position: 3.6px center, 17px center;
  background-repeat: repeat-x;
  font-size: 9.5px;
  line-height: 12px;
  color: #555;
}
.ruler-h span {
  flex: none;
  width: 113.1px;
  text-align: center;
}
.ruler-mark {
  position: absolute;
  left: 266px;
  top: 0;
  width: 1px;
  height: 11px;
  background: repeating-linear-gradient(#d9644a 0 2px, transparent 2px 4px);
}
.canvas {
  flex: 1;
  min-height: 0;
  display: flex;
  padding-left: 4px;
}
.ruler-v {
  width: 13px;
  margin-top: 1px;
  flex: none;
  position: relative;
  overflow: hidden;
  border: 1px solid #e6e6e6;
  border-bottom: 0;
  background-image: linear-gradient(#b0b0b0 1px, transparent 1px), linear-gradient(#999 1px, transparent 1px);
  background-size: 2px 14.14px, 6px 56.55px;
  background-position: center 8px, center 8px;
  background-repeat: repeat-y;
}
.ruler-v-nums {
  margin-top: -48.5px;
  display: flex;
  flex-direction: column;
  font-size: 9.5px;
  color: #555;
}
.ruler-v-nums span {
  height: 113.1px;
  display: flex;
  align-items: center;
  justify-content: center;
}
.ruler-v-nums b {
  font-weight: 400;
  transform: rotate(-90deg);
}
.ruler-mark-v {
  position: absolute;
  left: 0;
  top: 133px;
  width: 100%;
  height: 1px;
  background: repeating-linear-gradient(90deg, #d9644a 0 2px, transparent 2px 4px);
}
.slide {
  flex: 1;
  min-width: 0;
  margin: 0 4px 0 12px;
  position: relative;
  display: flex;
  flex-direction: column;
  background-color: #fff;
  border-left: 1px solid #d8d8d8;
  border-right: 1px solid #d8d8d8;
  font-weight: 300;
}
.slide-title {
  margin: 0;
  padding-left: 45px;
  font-size: 38.5px;
  font-weight: 300;
  letter-spacing: -1.6px;
  line-height: 34px;
  color: #7c7f88;
  white-space: nowrap;
}
.spell {
  text-decoration: underline wavy #dc5a5a 1px;
  text-underline-offset: 3px;
}
.slide-body {
  padding: 69px 0 0 130px;
  color: #3f3f46;
}
.topic {
  margin-bottom: 46px;
}
.topic-second {
  margin-bottom: 42px;
}
.slide-body p {
  margin: 0;
  position: relative;
  white-space: nowrap;
}
.lvl1 {
  font-size: 29px;
  letter-spacing: 0.55px;
  line-height: 44px;
  margin-bottom: 2px !important;
}
.lvl1::before, .lvl2::before {
  content: "";
  position: absolute;
  border-radius: 50%;
  background-color: #4a4a52;
}
.lvl1::before {
  left: -28px;
  top: 18px;
  width: 8px;
  height: 8px;
}
.lvl2 {
  margin-left: 57px !important;
  font-size: 26px;
  letter-spacing: 0.75px;
  line-height: 41px;
}
.lvl2::before {
  left: -27px;
  top: 18px;
  width: 7px;
  height: 7px;
}
.slide-link {
  color: #0b5cc5;
  letter-spacing: 1.15px;
  text-decoration: underline;
  text-decoration-thickness: 1.5px;
}
.ibeam {
  position: absolute;
  left: 303px;
  top: 125px;
}
.slide-foot {
  margin-top: auto;
  height: 22px;
  flex: none;
  display: flex;
  justify-content: space-between;
  align-items: flex-start;
  padding: 0 115px 0 50px;
  overflow: hidden;
  color: #666;
}
.sw-logo {
  position: relative;
  margin-top: -2px;
  font-size: 32.5px;
  line-height: 30px;
  font-weight: 300;
  letter-spacing: 0.3px;
  color: #6a6a6a;
}
.sw-logo b {
  font-weight: 700;
  color: #5f5f5f;
}
.sw-logo sup {
  font-size: 5px;
  vertical-align: 21px;
  line-height: 0;
}
.sw-swoosh {
  position: absolute;
  left: 131px;
  top: 17px;
}
.sw-copy {
  padding-top: 9px;
  font-size: 14px;
  line-height: 18px;
  font-weight: 300;
  color: #8a8a8a;
}

/* scrollbars */
.sb-btn {
  width: 13px;
  height: 13px;
  flex: none;
  display: flex;
  align-items: center;
  justify-content: center;
  font-size: 9px;
  line-height: 1;
  color: #444;
  background-color: #fff;
  border: 1px solid #ababab;
}
.vscroll {
  width: 14px;
  flex: none;
  display: flex;
  flex-direction: column;
  padding-top: 1px;
  background-color: #f0f0f0;
  margin-top: 0;
}
.sb-track {
  flex: 1;
  padding-top: 482px;
}
.sb-thumb {
  height: 48px;
  background-color: #fff;
  border: 1px solid #ababab;
}
.hscroll {
  height: 17px;
  flex: none;
  display: flex;
  align-items: flex-start;
  padding: 0 14px 0 2px;
  background: linear-gradient(#efefef 12px, #fff 12px);
  border-top: 1px solid #ababab;
  border-bottom: 0;
}
.hscroll .sb-btn {
  height: 12px;
}
.hs-thumb {
  flex: 1;
  height: 12px;
  margin: 0 16px 0 18px;
  background-color: #fff;
  border: 1px solid #ababab;
  border-top: 0;
}
.notes {
  height: 51px;
  flex: none;
  padding: 3px 0 0 10px;
  font-size: 12px;
  color: #555;
  background-color: #eee;
  border-top: 2px solid #d6d6d6;
  border-bottom: 1px solid #f6d8ce;
}

/* status bar */
.statusbar {
  height: 18px;
  flex: none;
  display: flex;
  align-items: center;
  padding: 0 4px 0 6px;
  background-color: #d24726;
  color: #fff;
  font-size: 9px;
}
.st-proof {
  margin-left: 17px;
}
.st-right {
  margin-left: auto;
  display: flex;
  align-items: center;
  height: 100%;
}
.st-item {
  display: flex;
  align-items: center;
  gap: 4px;
}
.st-comments {
  margin-left: 18px;
}
.st-views {
  display: flex;
  height: 100%;
  margin-left: 17px;
  gap: 1px;
}
.st-view {
  width: 32px;
  display: flex;
  align-items: center;
  justify-content: center;
}
.st-view-on {
  background-color: #b23a1e;
}
.st-zoom {
  display: flex;
  align-items: center;
  margin-left: 3px;
}
.st-minus {
  width: 4px;
  height: 4px;
  background-color: #fff;
}
.st-track {
  position: relative;
  width: 90px;
  height: 2px;
  margin-left: 3px;
  background-color: #fff;
}
.st-knob {
  position: absolute;
  left: 49px;
  top: -6px;
  width: 3px;
  height: 14px;
  background-color: #fff;
}
.st-plus {
  margin-left: 2px;
  font-size: 13px;
  line-height: 1;
}
.st-pct {
  margin-left: 13px;
  width: 25px;
  font-size: 9.5px;
}
.st-fit {
  margin-left: 5px;
}

/* windows taskbar */
.taskbar {
  height: 34px;
  flex: none;
  display: flex;
  align-items: stretch;
  background-color: #a6bfdb;
}
.task {
  flex: none;
  width: 50px;
  margin-right: 2px;
  display: flex;
  align-items: center;
  justify-content: center;
}
.task-open {
  background-color: #b9cce2;
  border: 1px solid #8ea6c1;
  border-radius: 2px;
  box-shadow: inset 0 0 0 1px #d4e0ee;
}
.task-start {
  width: 50px;
  padding-right: 5px;
  background: linear-gradient(90deg, #7f95ae, #a6bfdb);
}
.task-ie {
  margin-right: 0;
  padding-right: 4px;
}
.task-skype {
  width: 43px;
  margin-right: 9px;
}
.task-excel {
  width: 43px;
  margin-right: 5px;
}
.task-office {
  width: 53px;
  margin-right: 0;
}
.task-word {
  width: 55px;
  margin-right: 2px;
}
.task-outlook {
  background: linear-gradient(#f6a74b, #e8891f);
}
.task-ppt {
  background-color: #e9eff6;
}
.tray {
  margin-left: auto;
  width: 190px;
  display: flex;
  align-items: center;
  gap: 9px;
  padding-left: 22px;
  background: linear-gradient(90deg, #a6bfdb, #7b92ae 18%);
  color: #fff;
}
.tray-up {
  font-size: 8px;
}
.clock {
  margin: 2px 0 0 6px;
  display: flex;
  flex-direction: column;
  align-items: flex-end;
  gap: 3px;
  font-size: 10px;
  line-height: 11px;
  white-space: nowrap;
  color: #f0f4f9;
}
.show-desktop {
  width: 12px;
  height: 100%;
  margin-left: auto;
  background: repeating-linear-gradient(#6b7d92 0 1px, #8fa1b5 1px 2px);
  border-left: 1px solid #a8b8ca;
}

/* overlays on the shared screen */
.touch-circle {
  position: absolute;
  left: 1689px;
  top: 960px;
  width: 52px;
  height: 52px;
  border-radius: 50%;
  background: linear-gradient(135deg, rgba(70, 130, 170, 0.7), rgba(90, 140, 90, 0.6));
}
.touch-circle i {
  position: absolute;
  left: 5px;
  top: 3px;
  width: 41px;
  height: 32px;
  border-radius: 50% 60% 50% 50%;
  background: linear-gradient(160deg, #cbcbcb, #adadad);
}
.zoom-panel {
  position: absolute;
  right: 0;
  top: 535px;
  width: 50px;
  height: 130px;
  display: flex;
  flex-direction: column;
  align-items: center;
  padding: 13px 0 0 0;
  gap: 13px;
  background-color: #b3b3b3;
}
.pan {
  margin-top: 1px;
  margin-right: 3px;
}
```
